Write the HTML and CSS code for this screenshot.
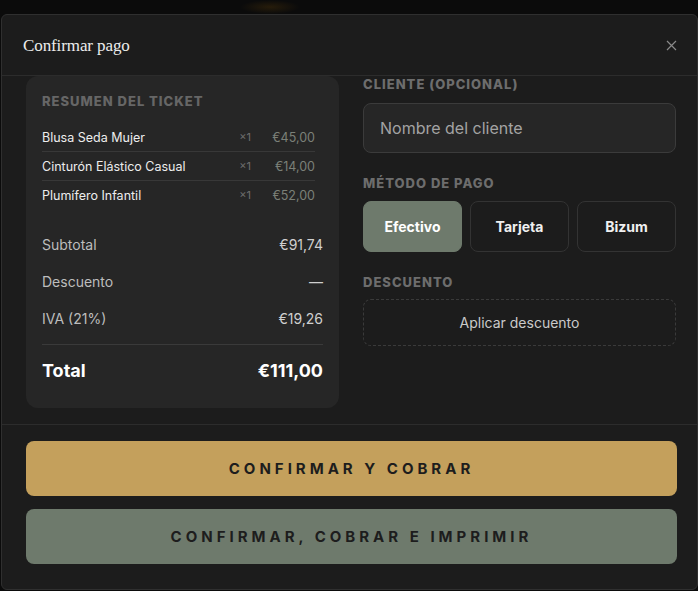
FILE: index.html
```html
<!DOCTYPE html>
<html lang="es">
<head>
<meta charset="utf-8">
<title>Confirmar pago</title>
<link rel="stylesheet" href="styles.css">
</head>
<body>
<div class="backdrop">
  <div class="glow"></div>
  <div class="modal">
    <header class="modal-header">
      <h1 class="modal-title">Confirmar pago</h1>
      <button class="close" aria-label="Cerrar">
        <svg width="11" height="11" viewBox="0 0 11 11"><path d="M1 1L10 10M10 1L1 10" stroke="#8a8a8a" stroke-width="1.2" fill="none"/></svg>
      </button>
    </header>
    <div class="modal-body">
      <section class="ticket">
        <h2 class="section-label ticket-label">RESUMEN DEL TICKET</h2>
        <ul class="items">
          <li class="item"><span class="item-name">Blusa Seda Mujer</span><span class="item-qty">×1</span><span class="item-price">€45,00</span></li>
          <li class="item"><span class="item-name">Cinturón Elástico Casual</span><span class="item-qty">×1</span><span class="item-price">€14,00</span></li>
          <li class="item"><span class="item-name">Plumífero Infantil</span><span class="item-qty">×1</span><span class="item-price">€52,00</span></li>
        </ul>
        <div class="totals">
          <div class="total-row"><span>Subtotal</span><span class="val">€91,74</span></div>
          <div class="total-row"><span>Descuento</span><span class="val">—</span></div>
          <div class="total-row"><span>IVA (21%)</span><span class="val">€19,26</span></div>
        </div>
        <div class="grand-total"><span>Total</span><span>€111,00</span></div>
      </section>
      <section class="form">
        <h2 class="section-label">CLIENTE (OPCIONAL)</h2>
        <div class="input">Nombre del cliente</div>
        <h2 class="section-label gap-label">MÉTODO DE PAGO</h2>
        <div class="methods">
          <button class="method active">Efectivo</button>
          <button class="method">Tarjeta</button>
          <button class="method">Bizum</button>
        </div>
        <h2 class="section-label gap-label">DESCUENTO</h2>
        <button class="discount">Aplicar descuento</button>
      </section>
    </div>
    <footer class="modal-footer">
      <button class="cta cta-gold">CONFIRMAR Y COBRAR</button>
      <button class="cta cta-sage">CONFIRMAR, COBRAR E IMPRIMIR</button>
    </footer>
  </div>
</div>
</body>
</html>
```

FILE: styles.css
```css
* { box-sizing: border-box; }
html, body { margin: 0; padding: 0; }
body {
  background: #0b0b0b;
  font-family: Inter, "Noto Sans", "DejaVu Sans", sans-serif;
  color: #e8e8e8;
  width: 698px;
  height: 591px;
  overflow: hidden;
}
.backdrop {
  position: relative;
  padding: 14px 0 0 1px;
  height: 591px;
}
.glow {
  position: absolute;
  left: 240px;
  top: 0;
  width: 60px;
  height: 14px;
  background: radial-gradient(ellipse at center, rgba(90,60,10,0.35), rgba(0,0,0,0) 70%);
}
.modal {
  position: relative;
  width: 697px;
  height: 576px;
  background: #1c1c1c;
  border: 1px solid #2f2f2f;
  border-radius: 6px;
  display: flex;
  flex-direction: column;
}
.modal-header {
  height: 61px;
  border-bottom: 1px solid #2c2c2c;
  display: flex;
  align-items: center;
  justify-content: space-between;
  padding: 1px 20px 0 21px;
}
.modal-title {
  margin: 0;
  font-family: "Liberation Serif", "DejaVu Serif", serif;
  font-weight: 400;
  font-size: 17px;
  color: #ececec;
  letter-spacing: -0.1px;
}
.close {
  background: none;
  border: 0;
  padding: 0;
  width: 11px;
  height: 11px;
  display: flex;
}
.modal-body {
  height: 349px;
  border-bottom: 1px solid #2c2c2c;
  display: grid;
  grid-template-columns: 313px 313px;
  column-gap: 24px;
  padding: 0 21px 0 24px;
  align-items: start;
}
.section-label {
  margin: 0;
  font-size: 13px;
  font-weight: 800;
  letter-spacing: 1px;
  line-height: 17px;
  color: #6d6d6d;
}
.ticket {
  background: #262626;
  border-radius: 12px;
  padding: 16px 16px 16px 16px;
  height: 332px;
}
.ticket-label {
  margin-top: 1px;
  color: #666;
}
.items {
  list-style: none;
  margin: 13px 8px 0 0;
  padding: 0;
}
.item {
  display: flex;
  align-items: center;
  height: 29px;
  font-size: 12.5px;
  border-top: 1px solid #383838;
}
.item:first-child { border-top: 0; height: 28px; }
.item-name { flex: 1; color: #ededed; }
.item-qty { color: #6e6e6e; font-size: 11px; }
.item-price { width: 64px; text-align: right; color: #7b8078; }
.totals {
  margin-top: 17px;
  padding-bottom: 7px;
  border-bottom: 1px solid #3a3a3a;
}
.total-row {
  display: flex;
  justify-content: space-between;
  align-items: center;
  height: 37px;
  font-size: 14px;
  color: #bdbdbd;
}
.total-row .val { color: #cfcfcf; }
.grand-total {
  display: flex;
  justify-content: space-between;
  align-items: center;
  padding-top: 15px;
  line-height: 22px;
  font-size: 18px;
  font-weight: 700;
  color: #ffffff;
}
.form {
  padding-top: 0;
  display: flex;
  flex-direction: column;
}
.input {
  margin-top: 10px;
  height: 50px;
  background: #262626;
  border: 1px solid #3b3b3b;
  border-radius: 8px;
  display: flex;
  align-items: center;
  padding-left: 16px;
  font-size: 16px;
  color: #a3a3a3;
}
.gap-label { margin-top: 22px; }
.methods {
  margin-top: 9px;
  display: grid;
  grid-template-columns: repeat(3, 1fr);
  gap: 8px;
}
.method {
  height: 51px;
  border-radius: 8px;
  border: 1px solid #333;
  background: #1c1c1c;
  color: #f0f0f0;
  font-family: inherit;
  font-size: 14px;
  font-weight: 700;
}
.method.active {
  background: #6e7a6c;
  border-color: #6e7a6c;
  color: #ffffff;
}
.discount {
  margin-top: 8px;
  height: 47px;
  border: 1px dashed #3a3a3a;
  border-radius: 8px;
  background: transparent;
  color: #cacaca;
  font-family: inherit;
  font-size: 14px;
}
.modal-footer {
  flex: 1;
  padding: 16px 20px 0 24px;
  display: flex;
  flex-direction: column;
  gap: 13px;
}
.cta {
  height: 55px;
  border: 0;
  border-radius: 8px;
  font-family: inherit;
  font-size: 15px;
  font-weight: 700;
  letter-spacing: 4px;
  color: #1d1d1d;
}
.cta-gold { background: #c4a05c; }
.cta-sage { background: #6e7a6c; }
```
